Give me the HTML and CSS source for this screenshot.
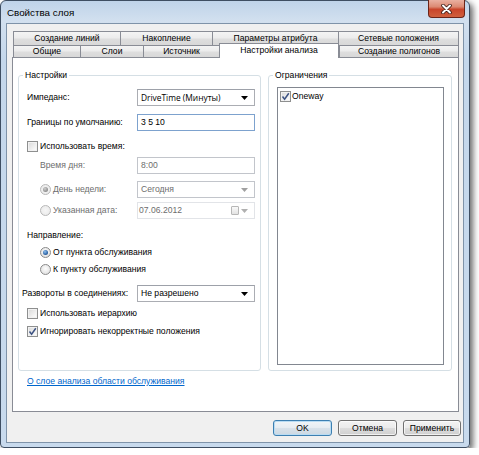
FILE: index.html
```html
<!DOCTYPE html>
<html lang="ru">
<head>
<meta charset="utf-8">
<title>Свойства слоя</title>
<link rel="stylesheet" href="styles.css">
</head>
<body>
<div class="window">
  <div class="titlebar">
    <span class="title">Свойства слоя</span>
  </div>
  <div class="close">
    <svg width="11" height="10" viewBox="0 0 11 10"><path d="M2 1.5 L9 8.5 M9 1.5 L2 8.5" stroke="#3a1a14" stroke-width="3.6" stroke-linecap="round"/><path d="M2 1.5 L9 8.5 M9 1.5 L2 8.5" stroke="#fff" stroke-width="2" stroke-linecap="round"/></svg>
  </div>
  <div class="client">
    <div class="tabs">
      <div class="tabrow row1">
        <div class="tab w107">Создание линий</div>
        <div class="tab w92">Накопление</div>
        <div class="tab w126">Параметры атрибута</div>
        <div class="tab w121 last">Сетевые положения</div>
      </div>
      <div class="tabrow row2">
        <div class="tab w67">Общие</div>
        <div class="tab w63">Слои</div>
        <div class="tab w76">Источник</div>
        <div class="tab w120 active">Настройки анализа</div>
        <div class="tab w120 last">Создание полигонов</div>
      </div>
    </div>
    <div class="panel">
      <div class="groups">
        <div class="group settings">
          <span class="legend">Настройки</span>
          <div class="row r1">
            <span class="lbl">Импеданс:</span>
            <div class="ctl combo"><span class="val seg">DriveTime (Минуты)</span><svg class="arrow" width="7" height="4" viewBox="0 0 7 4"><polygon points="0,0 7,0 3.5,4" fill="#000"/></svg></div>
          </div>
          <div class="row r2">
            <span class="lbl">Границы по умолчанию:</span>
            <div class="ctl focus"><span class="val">3 5 10</span></div>
          </div>
          <div class="row r3 short">
            <span class="cb"></span><span>Использовать время:</span>
          </div>
          <div class="row r4">
            <span class="lbl ind dis">Время дня:</span>
            <div class="ctl disabled"><span class="val dis">8:00</span></div>
          </div>
          <div class="row r5">
            <span class="lbl ind dis"><span class="rb on off"></span>День недели:</span>
            <div class="ctl combo disabled"><span class="val dis">Сегодня</span><svg class="arrow" width="7" height="4" viewBox="0 0 7 4"><polygon points="0,0 7,0 3.5,4" fill="#a0a0a0"/></svg></div>
          </div>
          <div class="row r6">
            <span class="lbl ind dis"><span class="rb off"></span>Указанная дата:</span>
            <div class="ctl date"><span class="val dis">07.06.2012</span><span class="cal"></span><svg class="arrow" width="7" height="4" viewBox="0 0 7 4"><polygon points="0,0 7,0 3.5,4" fill="#b0b0b0"/></svg></div>
          </div>
          <div class="row r7 short">
            <span>Направление:</span>
          </div>
          <div class="row r8 short ind">
            <span class="rb on"></span><span>От пункта обслуживания</span>
          </div>
          <div class="row r9 short ind">
            <span class="rb"></span><span>К пункту обслуживания</span>
          </div>
          <div class="row r10">
            <span class="lbl out">Развороты в соединениях:</span>
            <div class="ctl combo"><span class="val">Не разрешено</span><svg class="arrow" width="7" height="4" viewBox="0 0 7 4"><polygon points="0,0 7,0 3.5,4" fill="#000"/></svg></div>
          </div>
          <div class="row r11 short">
            <span class="cb"></span><span>Использовать иерархию</span>
          </div>
          <div class="row r12 short">
            <span class="cb checked"><svg width="9" height="9" viewBox="0 0 9 9"><path d="M1.5 4.5 L3.6 7.2 L7.8 1.2" fill="none" stroke="#3d5383" stroke-width="1.5"/></svg></span><span>Игнорировать некорректные положения</span>
          </div>
        </div>
        <div class="group limits">
          <span class="legend">Ограничения</span>
          <div class="listbox">
            <div class="item"><span class="cb checked"><svg width="9" height="9" viewBox="0 0 9 9"><path d="M1.5 4.5 L3.6 7.2 L7.8 1.2" fill="none" stroke="#3d5383" stroke-width="1.5"/></svg></span><span>Oneway</span></div>
          </div>
        </div>
      </div>
      <a class="link" href="#">О слое анализа области обслуживания</a>
    </div>
    <div class="buttons">
      <div class="btn default">OK</div>
      <div class="btn">Отмена</div>
      <div class="btn w58">Применить</div>
    </div>
  </div>
</div>
</body>
</html>
```

FILE: styles.css
```css
* { box-sizing: border-box; }
html, body { margin: 0; padding: 0; background: #fff; }
body {
  font-family: "Liberation Sans", Arial, sans-serif;
  font-size: 8.6px;
  color: #000;
  line-height: 11px;
}

.window {
  position: relative;
  width: 470px;
  height: 448px;
  border: 1px solid #3e4e62;
  border-radius: 6px 6px 4px 4px;
  background: linear-gradient(180deg, #bfd3e9 0, #d2e0ef 20px, #c4d7eb 60px, #c8daed 100%);
  padding: 0 5px 4px 5px;
  display: flex;
  flex-direction: column;
  box-shadow: 3px 3px 6px rgba(0, 0, 0, 0.6);
}

.titlebar {
  height: 22px;
  display: flex;
  align-items: center;
  padding-left: 1px;
}
.title {
  font-size: 9.8px;
  margin-top: 1px;
}

.close {
  position: absolute;
  top: -1px;
  right: 4px;
  width: 37px;
  height: 18px;
  border: 1px solid #6b2418;
  border-top: none;
  border-radius: 0 0 4px 4px;
  background: linear-gradient(180deg, #eab0a1 0, #dc8a73 40%, #c9452b 55%, #d0603e 100%);
  display: flex;
  align-items: center;
  justify-content: center;
}

.client {
  flex: 1;
  background: #f0f0f0;
  border: 1px solid #7f93a9;
  padding: 7px 4px 0 5px;
  display: flex;
  flex-direction: column;
}

/* tabs */
.tabs {
  height: 26px;
  display: flex;
  flex-direction: column;
  margin-left: 1px;
}
.tabrow { display: flex; }
.row1 { height: 14px; }
.row2 { height: 12px; }
.tab {
  height: 100%;
  border: 1px solid #898c95;
  border-right: none;
  border-bottom: none;
  background: linear-gradient(180deg, #f4f4f4 0, #ececec 45%, #dedede 55%, #d8d8d8 100%);
  display: flex;
  align-items: center;
  justify-content: center;
  white-space: nowrap;
}
.tab.last { border-right: 1px solid #898c95; }
.tab.active {
  position: relative;
  z-index: 1;
  margin-top: -2px;
  height: 15px;
  background: #fff;
  border-right: 1px solid #898c95;
  padding-bottom: 1px;
}
.w107 { width: 107px; }
.w92 { width: 92px; }
.w126 { width: 126px; }
.w121 { width: 121px; }
.w67 { width: 67px; }
.w63 { width: 63px; }
.w76 { width: 76px; }
.w120 { width: 120px; }

/* panel */
.panel {
  height: 355px;
  border: 1px solid #898c95;
  background: #fff;
  padding: 17px 0 0 5px;
  display: flex;
  flex-direction: column;
  align-items: flex-start;
}
.groups {
  display: flex;
  gap: 7px;
}
.group {
  position: relative;
  height: 296px;
  border: 1px solid #d5dfe5;
  border-radius: 3px;
}
.legend {
  position: absolute;
  top: -6px;
  left: 4px;
  padding: 0 2px;
  background: #fff;
  line-height: 11px;
}
.settings {
  width: 243px;
  padding: 13px 5px 0 8px;
  display: flex;
  flex-direction: column;
}
.limits {
  width: 184px;
  padding: 11px 0 0 8px;
}

.row {
  display: flex;
  align-items: center;
  height: 17px;
  white-space: nowrap;
}
.row.short { height: 13px; }
.row.ind { padding-left: 13px; }
.r2 { margin-top: 8px; }
.r3 { margin-top: 9px; }
.r4 { margin-top: 4px; }
.r5 { margin-top: 7px; }
.r6 { margin-top: 4px; }
.r7 { margin-top: 10px; }
.r8 { margin-top: 4px; }
.r9 { margin-top: 4px; }
.r10 { margin-top: 9px; }
.r11 { margin-top: 5px; }
.r12 { margin-top: 5px; }

.lbl {
  width: 110px;
  display: flex;
  align-items: center;
}
.lbl.ind { padding-left: 13px; }
.lbl.out { margin-left: -5px; width: 115px; }
.dis { color: #6d6d6d; }

.ctl {
  width: 118px;
  height: 17px;
  border: 1px solid #abadb3;
  border-top-color: #9da1a9;
  background: #fff;
  display: flex;
  align-items: center;
  padding: 0 6px 0 3px;
}
.ctl .val { flex: 1; }
.ctl.focus { border-color: #7da2ce; }
.ctl.disabled { border-color: #c2c5cb; }
.ctl.date { border-color: #e2e4e8; padding-left: 1px; }
.seg { font-family: "Open Sans", "Liberation Sans", sans-serif; font-size: 8.4px; }
.arrow { flex: none; }
.cal {
  width: 8px;
  height: 9px;
  border: 1px solid #b7b7b7;
  border-radius: 1px;
  background: linear-gradient(#fafafa, #e2e2e2);
  margin-right: 2px;
}

/* checkbox & radio */
.cb {
  flex: none;
  width: 11px;
  height: 11px;
  border: 1px solid #8e8f8f;
  background: linear-gradient(135deg, #d8d8d8 0, #f4f4f4 70%, #fff 100%);
  box-shadow: inset 0 0 0 1px #f2f2f2;
  margin-right: 2px;
  display: flex;
  align-items: center;
  justify-content: center;
}
.rb {
  flex: none;
  position: relative;
  width: 11px;
  height: 11px;
  border: 1px solid #8a8a8a;
  border-radius: 50%;
  background: radial-gradient(circle at 50% 40%, #fdfdfd 0, #e4e4e4 70%, #d2d2d2 100%);
  margin-right: 2px;
}
.rb.off { border-color: #b8b8b8; background: radial-gradient(circle, #f6f6f6, #e8e8e8); }
.rb.on::after {
  content: "";
  position: absolute;
  left: 2px;
  top: 2px;
  width: 5px;
  height: 5px;
  border-radius: 50%;
  background: radial-gradient(circle at 40% 35%, #8fc0ef 0, #2f67a8 60%, #1a3f73 100%);
}
.rb.on.off::after {
  background: radial-gradient(circle at 40% 35%, #d0d0d0 0, #8c8c8c 70%, #7a7a7a 100%);
}

.listbox {
  width: 167px;
  height: 278px;
  border: 1px solid #828790;
  padding: 2px 0 0 2px;
}
.item {
  display: flex;
  align-items: center;
  height: 12px;
}
.item .cb { margin-right: 1px; }

.link {
  margin: 5px 0 0 9px;
  color: #0066cc;
  text-decoration: underline;
}

/* buttons */
.buttons {
  display: flex;
  justify-content: flex-end;
  gap: 6px;
  margin-top: 8px;
  margin-right: -2px;
}
.btn {
  width: 59px;
  height: 16px;
  border: 1px solid #707070;
  border-radius: 3px;
  background: linear-gradient(180deg, #f3f3f3 0, #ebebeb 48%, #dddddd 52%, #cfcfcf 100%);
  box-shadow: inset 0 0 0 1px rgba(255, 255, 255, 0.7);
  display: flex;
  align-items: center;
  justify-content: center;
}
.btn.w58 { width: 58px; }
.btn.default {
  border-color: #3c7fb1;
  box-shadow: inset 0 0 0 1px #b9dcf3;
  background: linear-gradient(180deg, #f1f5f8 0, #e7edf2 48%, #d8e2ea 52%, #ccd8e2 100%);
}
```
